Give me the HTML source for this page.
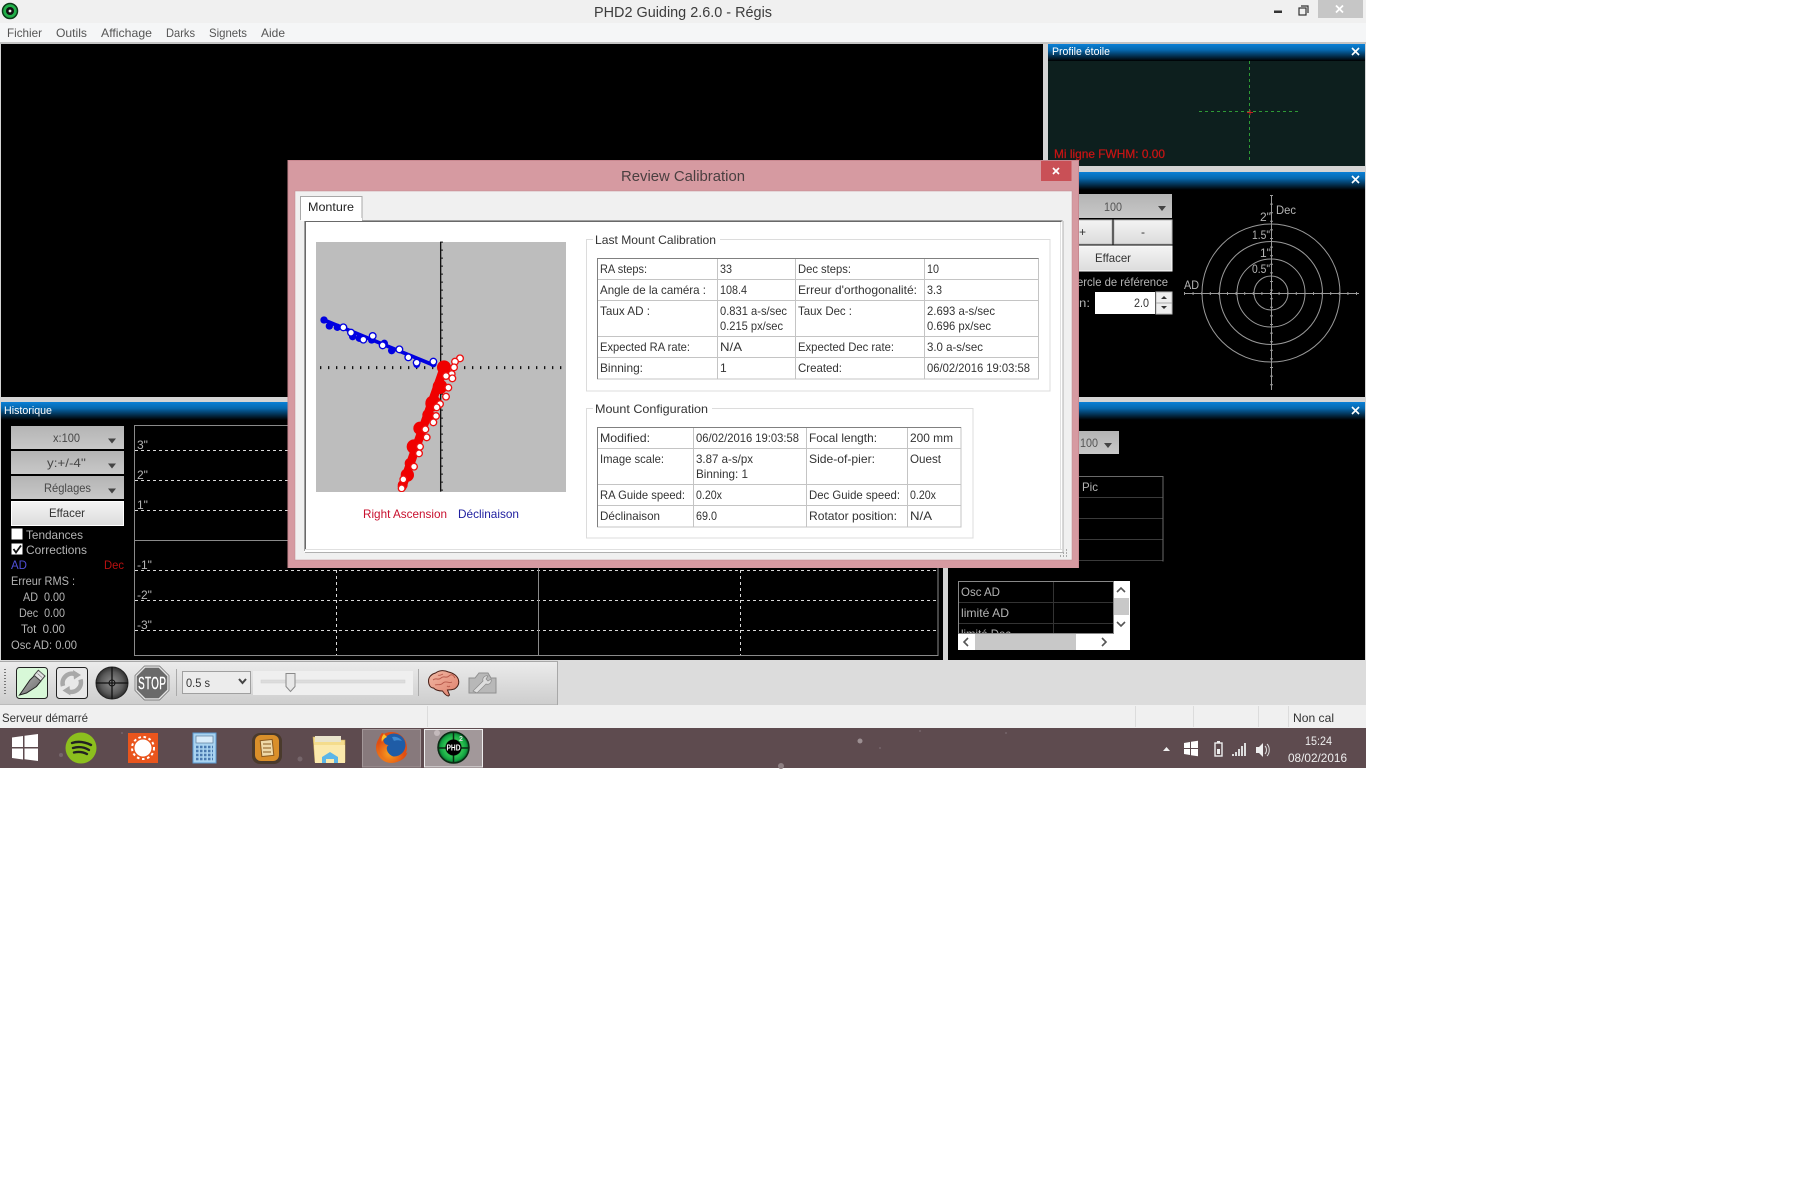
<!DOCTYPE html>
<html lang="fr"><head><meta charset="utf-8"><title>PHD2 Guiding 2.6.0 - Régis</title>
<style>
html,body{margin:0;padding:0;background:#fff;width:1800px;height:1198px;overflow:hidden}
svg{display:block}
text{font-family:"Liberation Sans",sans-serif;font-size:12px;white-space:pre}
.d text,.d{fill:#333}
.g text{fill:#b4b4b4}
.m text{fill:#555}
</style></head><body>
<svg width="1800" height="1198" viewBox="0 0 1800 1198" xmlns="http://www.w3.org/2000/svg">
<defs>
<linearGradient id="tb" x1="0" y1="0" x2="0" y2="1"><stop offset="0" stop-color="#0a80d6"/><stop offset=".35" stop-color="#0668ae"/><stop offset="1" stop-color="#000"/></linearGradient>
<linearGradient id="btn" x1="0" y1="0" x2="0" y2="1"><stop offset="0" stop-color="#b4b4b4"/><stop offset="1" stop-color="#c8c8c8"/></linearGradient>
<linearGradient id="wb" x1="0" y1="0" x2="0" y2="1"><stop offset="0" stop-color="#f4f4f4"/><stop offset="1" stop-color="#dcdcdc"/></linearGradient>
<linearGradient id="tool" x1="0" y1="0" x2="0" y2="1"><stop offset="0" stop-color="#ececec"/><stop offset="1" stop-color="#cdcdcd"/></linearGradient>
<linearGradient id="usb" x1="0" y1="0" x2="1" y2="1"><stop offset="0" stop-color="#b0b0b0"/><stop offset="1" stop-color="#6a6a6a"/></linearGradient>
<radialGradient id="loop"><stop offset="0" stop-color="#8e8e8e"/><stop offset=".7" stop-color="#5a5a5a"/><stop offset="1" stop-color="#303030"/></radialGradient>
<radialGradient id="ff" cx=".4" cy=".7"><stop offset="0" stop-color="#f8a020"/><stop offset="1" stop-color="#e04e12"/></radialGradient>
<radialGradient id="phd"><stop offset="0" stop-color="#0c5a28"/><stop offset=".6" stop-color="#2cc050"/><stop offset=".85" stop-color="#10a040"/><stop offset="1" stop-color="#0a4a20"/></radialGradient>
<linearGradient id="brain" x1="0" y1="0" x2="1" y2="1"><stop offset="0" stop-color="#f0b8a4"/><stop offset="1" stop-color="#e0806c"/></linearGradient>
</defs>
<rect width="1800" height="1198" fill="#fff"/>

<!-- title bar -->
<rect x="0" y="0" width="1366" height="23" fill="#f0f0f0"/>
<circle cx="10" cy="11" r="7.5" fill="#22b04a" stroke="#0c3a18" stroke-width="1.5"/>
<circle cx="10" cy="11" r="4" fill="#111"/><circle cx="10" cy="11" r="1.4" fill="#eee"/>
<text x="594" y="17" textLength="178" lengthAdjust="spacingAndGlyphs" style="font-size:15px" fill="#3c3c3c">PHD2 Guiding 2.6.0 - Régis</text>
<rect x="1274" y="10.5" width="8" height="2.5" fill="#333"/>
<rect x="1299" y="8" width="7" height="7" fill="none" stroke="#333" stroke-width="1.2"/><path d="M1301 6h7v7" fill="none" stroke="#333" stroke-width="1.2"/>
<rect x="1318" y="0" width="45" height="18" fill="#c6c6c6"/>
<path d="M1336 5.500l7 7M1343 5.500l-7 7" stroke="#fff" stroke-width="1.8"/>

<!-- menu -->
<rect x="0" y="23" width="1366" height="20" fill="#f5f6f7"/>
<rect x="0" y="42" width="1366" height="2" fill="#c4c4c4"/>
<g class="m">
<text x="7" y="37" textLength="35" lengthAdjust="spacingAndGlyphs">Fichier</text>
<text x="56" y="37" textLength="31" lengthAdjust="spacingAndGlyphs">Outils</text>
<text x="101" y="37" textLength="51" lengthAdjust="spacingAndGlyphs">Affichage</text>
<text x="166" y="37" textLength="29" lengthAdjust="spacingAndGlyphs">Darks</text>
<text x="209" y="37" textLength="38" lengthAdjust="spacingAndGlyphs">Signets</text>
<text x="261" y="37" textLength="24" lengthAdjust="spacingAndGlyphs">Aide</text>
</g>

<!-- main background strips -->
<rect x="0" y="44" width="1366" height="616" fill="#d4d4d4"/>
<rect x="1" y="44" width="1042" height="353" fill="#000"/>

<!-- profile panel -->
<rect x="1048" y="44" width="317" height="122" fill="#0d1f1e"/>
<rect x="1048" y="44" width="317" height="17" fill="url(#tb)"/>
<text x="1052" y="55" textLength="58" lengthAdjust="spacingAndGlyphs" style="font-size:11px" fill="#fff">Profile étoile</text>
<path d="M1352 48l7 7M1359 48l-7 7" stroke="#fff" stroke-width="1.6"/>
<line x1="1249.500" y1="61" x2="1249.500" y2="161" stroke="#2e9a36" stroke-dasharray="3 3"/>
<line x1="1199" y1="111.500" x2="1298" y2="111.500" stroke="#2e9a36" stroke-dasharray="3 3"/>
<path d="M1247 112.500h6M1250 110v5" stroke="#c02020" stroke-width="1"/>
<text x="1054" y="158" textLength="111" lengthAdjust="spacingAndGlyphs" fill="#c81414" stroke="#c81414" stroke-width=".25">Mi ligne FWHM: 0.00</text>

<!-- target panel -->
<rect x="1048" y="172" width="317" height="225" fill="#000"/>
<rect x="1048" y="172" width="317" height="18" fill="url(#tb)"/>
<path d="M1352 176l7 7M1359 176l-7 7" stroke="#fff" stroke-width="1.6"/>
<rect x="1060" y="194" width="112" height="24" fill="url(#btn)"/>
<text x="1104" y="211" textLength="18" lengthAdjust="spacingAndGlyphs" fill="#555">100</text>
<path d="M1158 206h8l-4 5z" fill="#444"/>
<rect x="1060" y="220" width="52" height="24" fill="url(#wb)" stroke="#bbb"/>
<rect x="1114" y="220" width="58" height="24" fill="url(#wb)" stroke="#bbb"/>
<text x="1079" y="236" fill="#333">+</text><text x="1141" y="236" fill="#333">-</text>
<rect x="1060" y="246" width="112" height="25" fill="url(#wb)" stroke="#fff"/>
<text x="1095" y="262" textLength="36" lengthAdjust="spacingAndGlyphs" fill="#333">Effacer</text>
<g class="g">
<text x="1077" y="286" textLength="91" lengthAdjust="spacingAndGlyphs">ercle de référence</text>
<text x="1079" y="307" textLength="11" lengthAdjust="spacingAndGlyphs">n:</text>
</g>
<rect x="1095" y="292" width="60" height="22" fill="#fff"/>
<text x="1134" y="307" textLength="15" lengthAdjust="spacingAndGlyphs" fill="#333">2.0</text>
<rect x="1156" y="292" width="16" height="22" fill="#eee" stroke="#bbb"/>
<line x1="1156" y1="303" x2="1172" y2="303" stroke="#aaa"/>
<path d="M1161 299l3-3 3 3zM1161 306l3 3 3-3z" fill="#333"/>
<g fill="none" stroke="#9a9a9a" stroke-width="1">
<circle cx="1271" cy="293" r="17"/><circle cx="1271" cy="293" r="34"/><circle cx="1271" cy="293" r="51.500"/><circle cx="1271" cy="293" r="69"/>
<line x1="1271.500" y1="195" x2="1271.500" y2="390"/><line x1="1184" y1="293.500" x2="1359" y2="293.500"/>
<line x1="1184" y1="293.500" x2="1359" y2="293.500" stroke-width="3" stroke-dasharray="1 7.600"/>
<line x1="1271.500" y1="195" x2="1271.500" y2="390" stroke-width="3" stroke-dasharray="1 7.600"/>
</g>
<g class="g">
<text x="1276" y="214" textLength="20" lengthAdjust="spacingAndGlyphs">Dec</text>
<text x="1184" y="289" textLength="15" lengthAdjust="spacingAndGlyphs">AD</text>
<text x="1260" y="221">2"</text><text x="1252" y="239" textLength="18" lengthAdjust="spacingAndGlyphs">1.5"</text>
<text x="1260" y="257">1"</text><text x="1252" y="273" textLength="18" lengthAdjust="spacingAndGlyphs">0.5"</text>
</g>

<!-- history panel -->
<rect x="1" y="402" width="942" height="258" fill="#000"/>
<rect x="1" y="402" width="942" height="18" fill="url(#tb)"/>
<text x="4" y="414" textLength="48" lengthAdjust="spacingAndGlyphs" style="font-size:11px" fill="#fff">Historique</text>
<rect x="11" y="426" width="113" height="23" fill="url(#btn)"/>
<rect x="11" y="451" width="113" height="23" fill="url(#btn)"/>
<rect x="11" y="476" width="113" height="23" fill="url(#btn)"/>
<rect x="11.500" y="501.500" width="112" height="24" fill="url(#wb)" stroke="#fff"/>
<g fill="#484848">
<text x="53" y="442" textLength="27" lengthAdjust="spacingAndGlyphs">x:100</text>
<text x="47" y="467" textLength="39" lengthAdjust="spacingAndGlyphs">y:+/-4''</text>
<text x="44" y="492" textLength="47" lengthAdjust="spacingAndGlyphs">Réglages</text>
</g>
<path d="M108 438.500h8l-4 5zM108 463.500h8l-4 5zM108 488.500h8l-4 5z" fill="#444"/>
<text x="49" y="517" textLength="36" lengthAdjust="spacingAndGlyphs" fill="#333">Effacer</text>
<rect x="11.500" y="528.500" width="11" height="11" fill="#fff"/>
<rect x="11.500" y="543.500" width="11" height="11" fill="#fff"/>
<path d="M13.500 549l2.500 3.500 5-7" fill="none" stroke="#111" stroke-width="1.8"/>
<g class="g">
<text x="26" y="539" textLength="57" lengthAdjust="spacingAndGlyphs">Tendances</text>
<text x="26" y="554" textLength="61" lengthAdjust="spacingAndGlyphs">Corrections</text>
<text x="11" y="585" textLength="64" lengthAdjust="spacingAndGlyphs">Erreur RMS :</text>
<text x="23" y="601" textLength="42" lengthAdjust="spacingAndGlyphs">AD  0.00</text>
<text x="19" y="617" textLength="46" lengthAdjust="spacingAndGlyphs">Dec  0.00</text>
<text x="21" y="633" textLength="44" lengthAdjust="spacingAndGlyphs">Tot  0.00</text>
<text x="11" y="649" textLength="66" lengthAdjust="spacingAndGlyphs">Osc AD: 0.00</text>
</g>
<text x="11" y="569" textLength="16" lengthAdjust="spacingAndGlyphs" fill="#5050d8">AD</text>
<text x="104" y="569" textLength="20" lengthAdjust="spacingAndGlyphs" fill="#b81010">Dec</text>
<rect x="134.500" y="425.500" width="803.500" height="230" fill="none" stroke="#8a8a8a"/>
<line x1="135" y1="540.500" x2="938" y2="540.500" stroke="#8a8a8a"/>
<g stroke="#d8d8d8" stroke-dasharray="3 3" fill="none">
<line x1="135" y1="450.500" x2="938" y2="450.500"/><line x1="135" y1="480.500" x2="938" y2="480.500"/><line x1="135" y1="510.500" x2="938" y2="510.500"/>
<line x1="135" y1="570.500" x2="938" y2="570.500"/><line x1="135" y1="600.500" x2="938" y2="600.500"/><line x1="135" y1="630.500" x2="938" y2="630.500"/>
<line x1="336.500" y1="426" x2="336.500" y2="655"/><line x1="740.500" y1="426" x2="740.500" y2="655"/>
</g>
<line x1="538.500" y1="426" x2="538.500" y2="655" stroke="#8a8a8a"/>
<g class="g">
<text x="137" y="449">3"</text><text x="137" y="479">2"</text><text x="137" y="509">1"</text>
<text x="137" y="569">-1"</text><text x="137" y="599">-2"</text><text x="137" y="629">-3"</text>
</g>

<!-- right bottom panel -->
<rect x="948" y="402" width="417" height="258" fill="#000"/>
<rect x="948" y="402" width="417" height="18" fill="url(#tb)"/>
<path d="M1352 407l7 7M1359 407l-7 7" stroke="#fff" stroke-width="1.6"/>
<rect x="1060" y="431" width="59" height="23" fill="url(#btn)"/>
<text x="1080" y="447" textLength="18" lengthAdjust="spacingAndGlyphs" fill="#555">100</text>
<path d="M1104 443h8l-4 5z" fill="#444"/>
<g stroke="#3a3a3a" fill="none">
<path d="M1060 497.500h103M1060 518.500h103M1060 539.500h103M1060 560.500h103"/>
</g>
<path d="M1060 476.500h103v85" fill="none" stroke="#6a6a6a"/>
<text x="1082" y="491" textLength="16" lengthAdjust="spacingAndGlyphs" fill="#b4b4b4">Pic</text>
<rect x="958" y="581" width="172" height="69" fill="#fff"/>
<rect x="958.500" y="581.500" width="155" height="52" fill="#000" stroke="#888"/>
<path d="M959 602.500h154M959 623.500h154M1053.500 582v51" stroke="#333" fill="none"/>
<g class="g">
<text x="961" y="596" textLength="39" lengthAdjust="spacingAndGlyphs">Osc AD</text>
<text x="961" y="617" textLength="48" lengthAdjust="spacingAndGlyphs">limité AD</text>
</g>
<clipPath id="cl"><rect x="959" y="624" width="154" height="9"/></clipPath>
<text x="961" y="638" textLength="50" lengthAdjust="spacingAndGlyphs" fill="#b4b4b4" clip-path="url(#cl)">limité Dec</text>
<rect x="1114" y="598" width="15" height="17" fill="#c8c8c8"/>
<path d="M1117 592l4-4 4 4M1117 622l4 4 4-4" fill="none" stroke="#555" stroke-width="1.6"/>
<rect x="975" y="634" width="101" height="16" fill="#c8c8c8"/>
<path d="M968 638l-4 4 4 4M1102 638l4 4-4 4" fill="none" stroke="#555" stroke-width="1.6"/>

<!-- toolbar -->
<rect x="0" y="660" width="1366" height="45" fill="#dcdcdc"/>
<rect x="0" y="661" width="557" height="44" fill="url(#tool)" />
<path d="M0 661.500h557.500v43.500H0" fill="none" stroke="#a8a8a8"/>
<line x1="5" y1="669" x2="5" y2="695" stroke="#777" stroke-width="2" stroke-dasharray="1 2"/>
<rect x="16.500" y="667.500" width="31" height="31" rx="3" fill="#d8f8d8" stroke="#222"/>
<path d="M19.500 695l3.500-5 7-10 4.500-4.500 6.500 5.500-4.500 5.500-10 6.500z" fill="url(#usb)" stroke="#222"/>
<path d="M38.300 670.300l6.700 5.700-4.300 5-6.700-5.700z" fill="#e4e4e4" stroke="#444"/>
<path d="M37.500 673.500l4.500 4M39.500 671.500l4.500 4" stroke="#888" stroke-width=".8"/>
<rect x="56.500" y="667.500" width="31" height="31" rx="3" fill="#e8e8e8" stroke="#222"/>
<path d="M63 686a9.500 9.500 0 0 1 13-11.500M80.500 679.500a9.500 9.500 0 0 1-13 11.500" fill="none" stroke="#a8a8a8" stroke-width="4.500"/>
<path d="M73 670l8 5-7 4.500zM70.500 695.500l-8-5 7-4.500z" fill="#a8a8a8"/>
<circle cx="112" cy="683" r="16" fill="url(#loop)" stroke="#222"/>
<path d="M96 683h32M112 667v32" stroke="#111" stroke-width="1.3"/>
<circle cx="112" cy="683" r="3" fill="none" stroke="#111"/>
<polygon points="145,667 159,667 168,676 168,690 159,699 145,699 136,690 136,676" fill="#6a6a6a" stroke="#e4e4e4" stroke-width="1.500"/>
<polygon points="144.500,666 159.500,666 169,675.500 169,690.500 159.500,700 144.500,700 135,690.500 135,675.500" fill="none" stroke="#666" stroke-width=".7"/>
<text x="138" y="689.500" textLength="28" lengthAdjust="spacingAndGlyphs" style="font-size:18px;font-weight:bold" fill="#fff" stroke="#444" stroke-width=".3">STOP</text>
<line x1="176.500" y1="669" x2="176.500" y2="696" stroke="#aaa"/>
<rect x="182.500" y="671.500" width="68" height="22" fill="#ececec" stroke="#a0a0a0"/>
<text x="186" y="687" textLength="24" lengthAdjust="spacingAndGlyphs" fill="#333">0.5 s</text>
<path d="M239 679l3.500 4 3.500-4" fill="none" stroke="#444" stroke-width="2"/>
<rect x="253" y="671" width="160" height="24" fill="#efefef"/>
<rect x="261" y="680" width="144" height="3" fill="#dcdcdc" stroke="#d0d0d0" stroke-width=".5"/>
<path d="M286 673.500h9v13l-4.500 5-4.500-5z" fill="#e8e8e8" stroke="#8a8a8a"/>
<line x1="418.500" y1="669" x2="418.500" y2="696" stroke="#aaa"/>
<path d="M428.500 681c0-4 3-7 7-8 4-3 9-3 13-1 5 1 9 4 10 8 1 4-1 7-4 9-3 1-5 1-7 1l2 5-1 1c-2 0-4-2-6-5-4 0-7-1-9-3-3 0-5-3-5-7z" fill="url(#brain)" stroke="#4a2018" stroke-width="1"/>
<path d="M433 680c3-3 5 1 8-2s5 1 8-2 5 0 6 2M435 685c3-1 5 1 8-2s6 1 9-1M438 675c2 1 3 0 5-1M447 686c1 1 2 1 3 0" fill="none" stroke="#b85a4c" stroke-width=".9"/>
<path d="M469 678h6l4-5h9l3 5h5v15h-27z" fill="#b8b8b8" stroke="#909090"/>
<path d="M473 691l10-10c-1-3 2-6 5-5l-2 3 2 2 3-2c1 4-2 6-5 5l-9 9z" fill="#dedede" stroke="#8a8a8a" stroke-width=".7"/>

<!-- status bar -->
<rect x="0" y="705" width="1366" height="23" fill="#f0f0f0"/>
<text x="2" y="722" textLength="86" lengthAdjust="spacingAndGlyphs" fill="#333">Serveur démarré</text>
<path d="M427.500 706v21M1135.500 706v21M1193.500 706v21M1258.500 706v21M1288.500 706v21" stroke="#dcdcdc"/>
<text x="1293" y="722" textLength="41" lengthAdjust="spacingAndGlyphs" fill="#333">Non cal</text>

<!-- taskbar -->
<rect x="0" y="728" width="1366" height="40" fill="#5e4b4f"/>
<circle cx="860" cy="741" r="2.500" fill="#9c8f92"/><circle cx="781" cy="766" r="3" fill="#8d7f82"/>
<g fill="#75656a">
<circle cx="61" cy="755" r="2"/><circle cx="300" cy="759" r="2.500"/><circle cx="880" cy="748" r="1"/><circle cx="920" cy="731" r="1"/><circle cx="1006" cy="733" r="1"/><circle cx="122" cy="733" r="1"/>
</g>
<path d="M12 737.500l11-1.500v11H12zM24.500 735.800l13.500-1.800v13H24.500zM12 748.500h11v11l-11-1.500zM24.500 748.500H38V761l-13.500-1.800z" fill="#fff"/>
<circle cx="81" cy="748" r="15.500" fill="#8cbf1e"/>
<path d="M72 743c6-2 13-1 19 2M73 748c5-1.500 11-1 16 2M74 752.500c4-1 9-.6 13 1.500" fill="none" stroke="#222" stroke-width="2.400" stroke-linecap="round"/>
<rect x="128" y="733" width="30" height="30" fill="#e9551d"/>
<circle cx="143" cy="748" r="8.500" fill="#fff"/><circle cx="143" cy="748" r="11" fill="none" stroke="#fff" stroke-width="2" stroke-dasharray="2.600 2.600"/>
<rect x="193" y="733" width="23" height="30" fill="#a9d3f0" stroke="#5a9ad0"/>
<rect x="196" y="736" width="17" height="7" fill="#d8ecfa" stroke="#5a7a9a" stroke-width=".7"/>
<path d="M196 747h17M196 751h17M196 755h17M196 759h17" stroke="#4a7ab0" stroke-width="2.400" stroke-dasharray="2.500 1.500"/>
<rect x="252" y="733" width="30" height="31" rx="8" fill="#4a3a2c"/>
<rect x="255" y="735" width="24" height="26" rx="6" fill="#d98f2a"/>
<rect x="261" y="740" width="12" height="16" fill="#eed9a8" stroke="#8a5a20" transform="rotate(-6 267 748)"/>
<path d="M263 744h8M263 748h8M263 752h8" stroke="#8a5a20"/>
<path d="M313 737h14l3 3h15v22h-30z" fill="#f4dc8c" stroke="#c8a858" stroke-width=".6"/>
<rect x="315" y="736" width="26" height="6" fill="#e9e4cc"/>
<path d="M314 745h31v18h-30z" fill="#fbe9ac"/>
<path d="M322 763v-6l8-5 8 5v6h-4v-4h-8v4z" fill="#5cb6e8"/>
<rect x="362.500" y="729.500" width="58" height="37.500" fill="#87797c" stroke="#a39799"/>
<circle cx="391.500" cy="747.500" r="15.500" fill="url(#ff)"/>
<circle cx="394" cy="745" r="11.500" fill="#1f5ca6"/>
<path d="M392 737c4-1 8 1 10 4-3-1-6-1-8 0z" fill="#3f8ad0"/>
<path d="M382 733c-5 6-6 16-1 23 6 8 18 8 24 1 1-1 2-3 2.500-5-5 5-12 7-17 3-4-3-5-8-2-10-3 0-5-2-5-5l2-4c-1-2-2-3-3.500-3z" fill="url(#ff)"/>
<path d="M384 734c-2 2-3 5-2 8 1-3 3-4 5-5z" fill="#fbc02d"/>
<rect x="424.500" y="729.500" width="58" height="37.500" fill="#a2989a" stroke="#eee"/>
<circle cx="437" cy="733" r="3" fill="#c4babc"/>
<circle cx="453.500" cy="747.500" r="15.500" fill="url(#phd)" stroke="#0a2a14" stroke-width="1.500"/>
<path d="M438 748h31M453.500 732v31" stroke="#0a2a14" stroke-width="1.500"/>
<circle cx="453.500" cy="747.500" r="8" fill="#000"/>
<text x="446.500" y="750.500" textLength="14" lengthAdjust="spacingAndGlyphs" style="font-size:8px;font-weight:bold" fill="#fff">PHD</text>
<text x="459" y="741" style="font-size:7px;font-weight:bold" fill="#ddd">2</text>

<path d="M1163 751l3.500-4 3.500 4z" fill="#f0f0f0"/>
<path d="M1184 743l6-1v6h-6zM1191 741.800l7-1v7.200h-7zM1184 749h6v6l-6-1zM1191 749h7v7.200l-7-1z" fill="#fff"/>
<rect x="1215" y="743" width="7" height="13" fill="none" stroke="#eee" stroke-width="1.400"/><rect x="1217" y="741" width="3" height="2" fill="#eee"/><rect x="1217" y="749" width="3" height="5" fill="#eee"/>
<path d="M1232 754h2v2h-2zM1235 752h2v4h-2zM1238 749h2v7h-2zM1241 746h2v10h-2zM1244 743h2v13h-2z" fill="#ddd"/>
<path d="M1256 747h3l4-4v14l-4-4h-3z" fill="#eee"/><path d="M1265 746c2 2 2 6 0 8M1267 744c3 3 3 9 0 12" fill="none" stroke="#ddd"/>
<text x="1305" y="745" textLength="27" lengthAdjust="spacingAndGlyphs" fill="#eee">15:24</text>
<text x="1288" y="762" textLength="59" lengthAdjust="spacingAndGlyphs" fill="#eee">08/02/2016</text>

<!-- dialog -->
<rect x="288" y="160" width="791" height="408" fill="#d69aa1"/>
<path d="M288 568v-407.500h790.500V568" fill="none" stroke="#c98890"/>
<text x="621" y="181" textLength="124" lengthAdjust="spacingAndGlyphs" style="font-size:15px" fill="#4a3f40">Review Calibration</text>
<rect x="1041" y="161" width="30.500" height="20" fill="#c95056"/>
<path d="M1053 168l6 6M1059 168l-6 6" stroke="#fff" stroke-width="1.700"/>
<rect x="295" y="191" width="777" height="369" fill="#f0f0f0" stroke="#c08a90" stroke-width=".5"/>
<rect x="304" y="222" width="759" height="330" fill="#fff"/>
<path d="M304.500 551V220.500h758" fill="none" stroke="#a0a0a0"/>
<path d="M305.500 550V221.500h756" fill="none" stroke="#696969"/>
<path d="M305 549.500h757M1060.500 222v327" fill="none" stroke="#e0e0e0"/>
<path d="M305 552.500h758V221" fill="none" stroke="#b0b0b0"/>
<path d="M300.500 220V196.500h61.500V220" fill="#fff" stroke="#a8a8a8"/>
<rect x="301" y="218" width="61" height="3" fill="#fff"/>
<text x="308" y="211" textLength="46" lengthAdjust="spacingAndGlyphs" fill="#222">Monture</text>
<path d="M1066 556h1M1063 556h1M1060 556h1M1066 553h1M1063 553h1M1066 550h1" stroke="#aaa" stroke-width="2"/>

<!-- plot -->
<rect x="316" y="242" width="250" height="250" fill="#bdbdbd"/>
<g transform="translate(290 190) scale(.33333)">
<line x1="90" y1="533" x2="825" y2="533" stroke="#111" stroke-width="9" stroke-dasharray="4 20"/>
<line x1="452" y1="155" x2="452" y2="905" stroke="#111" stroke-width="4"/>
<line x1="456" y1="155" x2="456" y2="905" stroke="#111" stroke-width="6" stroke-dasharray="3 21"/>
<line x1="102" y1="390" x2="430" y2="525" stroke="#0000e0" stroke-width="11"/>
<g fill="#0000e0">
<circle cx="102" cy="390" r="11"/><circle cx="118" cy="408" r="11"/><circle cx="142" cy="412" r="11"/><circle cx="188" cy="440" r="11"/><circle cx="208" cy="445" r="11"/><circle cx="245" cy="450" r="11"/><circle cx="283" cy="460" r="11"/><circle cx="305" cy="482" r="11"/><circle cx="380" cy="524" r="10"/><circle cx="430" cy="522" r="10"/>
</g>
<g fill="#fff" stroke="#0000e0" stroke-width="4">
<circle cx="160" cy="412" r="10"/><circle cx="183" cy="428" r="10"/><circle cx="220" cy="449" r="10"/><circle cx="248" cy="438" r="10"/><circle cx="278" cy="466" r="10"/><circle cx="328" cy="478" r="10"/><circle cx="355" cy="502" r="10"/><circle cx="380" cy="518" r="10"/><circle cx="430" cy="515" r="10"/>
</g>
<line x1="465" y1="525" x2="335" y2="895" stroke="#f00000" stroke-width="26"/>
<g fill="#f00000">
<circle cx="462" cy="532" r="21"/><circle cx="450" cy="590" r="22"/><circle cx="430" cy="640" r="24"/><circle cx="415" cy="675" r="18"/><circle cx="390" cy="715" r="20"/><circle cx="372" cy="770" r="22"/><circle cx="360" cy="820" r="16"/><circle cx="352" cy="855" r="20"/><circle cx="338" cy="885" r="15"/>
</g>
<g fill="#fff" stroke="#ee1010" stroke-width="4">
<circle cx="510" cy="505" r="10"/><circle cx="495" cy="515" r="10"/><circle cx="492" cy="532" r="10"/><circle cx="485" cy="552" r="10"/><circle cx="468" cy="558" r="10"/><circle cx="487" cy="565" r="10"/><circle cx="475" cy="593" r="10"/><circle cx="468" cy="620" r="10"/><circle cx="450" cy="642" r="10"/><circle cx="440" cy="652" r="10"/><circle cx="438" cy="678" r="10"/><circle cx="430" cy="697" r="10"/><circle cx="406" cy="718" r="10"/><circle cx="410" cy="742" r="10"/><circle cx="390" cy="770" r="10"/><circle cx="387" cy="790" r="10"/><circle cx="372" cy="830" r="10"/><circle cx="340" cy="868" r="10"/><circle cx="335" cy="895" r="10"/>
</g>
</g>
<rect x="316" y="492" width="250" height="10" fill="#fff"/>
<text x="363" y="518" textLength="84" lengthAdjust="spacingAndGlyphs" fill="#c8102e">Right Ascension</text>
<text x="458" y="518" textLength="61" lengthAdjust="spacingAndGlyphs" fill="#2020a0">Déclinaison</text>

<!-- group 1 -->
<path d="M593 239.500h-6.500v151.500h463.500V239.500H720" fill="none" stroke="#dcdcdc"/>
<text x="595" y="244" textLength="121" lengthAdjust="spacingAndGlyphs" fill="#333">Last Mount Calibration</text>
<rect x="597.500" y="258.500" width="441" height="120.500" fill="#fff" stroke="#c4c4c4" stroke-width="1"/>
<path d="M597.500 379V258.500H1038.500" fill="none" stroke="#808080"/>
<path d="M598 279.500h440M598 300.500h440M598 336.500h440M598 357.500h440M717.500 259v120M795.500 259v120M924.500 259v120" stroke="#c4c4c4" fill="none"/>
<g class="d">
<text x="600" y="273" textLength="47" lengthAdjust="spacingAndGlyphs">RA steps:</text>
<text x="720" y="273" textLength="12" lengthAdjust="spacingAndGlyphs">33</text>
<text x="798" y="273" textLength="53" lengthAdjust="spacingAndGlyphs">Dec steps:</text>
<text x="927" y="273" textLength="12" lengthAdjust="spacingAndGlyphs">10</text>
<text x="600" y="294" textLength="106" lengthAdjust="spacingAndGlyphs">Angle de la caméra :</text>
<text x="720" y="294" textLength="27" lengthAdjust="spacingAndGlyphs">108.4</text>
<text x="798" y="294" textLength="119" lengthAdjust="spacingAndGlyphs">Erreur d'orthogonalité:</text>
<text x="927" y="294" textLength="15" lengthAdjust="spacingAndGlyphs">3.3</text>
<text x="600" y="315" textLength="50" lengthAdjust="spacingAndGlyphs">Taux AD :</text>
<text x="720" y="315" textLength="67" lengthAdjust="spacingAndGlyphs">0.831 a-s/sec</text>
<text x="720" y="330" textLength="63" lengthAdjust="spacingAndGlyphs">0.215 px/sec</text>
<text x="798" y="315" textLength="54" lengthAdjust="spacingAndGlyphs">Taux Dec :</text>
<text x="927" y="315" textLength="68" lengthAdjust="spacingAndGlyphs">2.693 a-s/sec</text>
<text x="927" y="330" textLength="64" lengthAdjust="spacingAndGlyphs">0.696 px/sec</text>
<text x="600" y="351" textLength="90" lengthAdjust="spacingAndGlyphs">Expected RA rate:</text>
<text x="720" y="351" textLength="22" lengthAdjust="spacingAndGlyphs">N/A</text>
<text x="798" y="351" textLength="96" lengthAdjust="spacingAndGlyphs">Expected Dec rate:</text>
<text x="927" y="351" textLength="56" lengthAdjust="spacingAndGlyphs">3.0 a-s/sec</text>
<text x="600" y="372" textLength="43" lengthAdjust="spacingAndGlyphs">Binning:</text>
<text x="720" y="372">1</text>
<text x="798" y="372" textLength="44" lengthAdjust="spacingAndGlyphs">Created:</text>
<text x="927" y="372" textLength="103" lengthAdjust="spacingAndGlyphs">06/02/2016 19:03:58</text>
</g>

<!-- group 2 -->
<path d="M593 408.500h-6.500v129.500h386.500V408.500H712" fill="none" stroke="#dcdcdc"/>
<text x="595" y="413" textLength="113" lengthAdjust="spacingAndGlyphs" fill="#333">Mount Configuration</text>
<rect x="597.500" y="427.500" width="363.500" height="99.500" fill="#fff" stroke="#c4c4c4"/>
<path d="M597.500 527V427.500H961" fill="none" stroke="#808080"/>
<path d="M598 448.500h363M598 484.500h363M598 505.500h363M693.500 428v99M806.500 428v99M907.500 428v99" stroke="#c4c4c4" fill="none"/>
<g class="d">
<text x="600" y="442" textLength="50" lengthAdjust="spacingAndGlyphs">Modified:</text>
<text x="696" y="442" textLength="103" lengthAdjust="spacingAndGlyphs">06/02/2016 19:03:58</text>
<text x="809" y="442" textLength="68" lengthAdjust="spacingAndGlyphs">Focal length:</text>
<text x="910" y="442" textLength="43" lengthAdjust="spacingAndGlyphs">200 mm</text>
<text x="600" y="463" textLength="64" lengthAdjust="spacingAndGlyphs">Image scale:</text>
<text x="696" y="463" textLength="57" lengthAdjust="spacingAndGlyphs">3.87 a-s/px</text>
<text x="696" y="478" textLength="52" lengthAdjust="spacingAndGlyphs">Binning: 1</text>
<text x="809" y="463" textLength="66" lengthAdjust="spacingAndGlyphs">Side-of-pier:</text>
<text x="910" y="463" textLength="31" lengthAdjust="spacingAndGlyphs">Ouest</text>
<text x="600" y="499" textLength="85" lengthAdjust="spacingAndGlyphs">RA Guide speed:</text>
<text x="696" y="499" textLength="26" lengthAdjust="spacingAndGlyphs">0.20x</text>
<text x="809" y="499" textLength="91" lengthAdjust="spacingAndGlyphs">Dec Guide speed:</text>
<text x="910" y="499" textLength="26" lengthAdjust="spacingAndGlyphs">0.20x</text>
<text x="600" y="520" textLength="60" lengthAdjust="spacingAndGlyphs">Déclinaison</text>
<text x="696" y="520" textLength="21" lengthAdjust="spacingAndGlyphs">69.0</text>
<text x="809" y="520" textLength="88" lengthAdjust="spacingAndGlyphs">Rotator position:</text>
<text x="910" y="520" textLength="22" lengthAdjust="spacingAndGlyphs">N/A</text>
</g>
</svg>
</body></html>
